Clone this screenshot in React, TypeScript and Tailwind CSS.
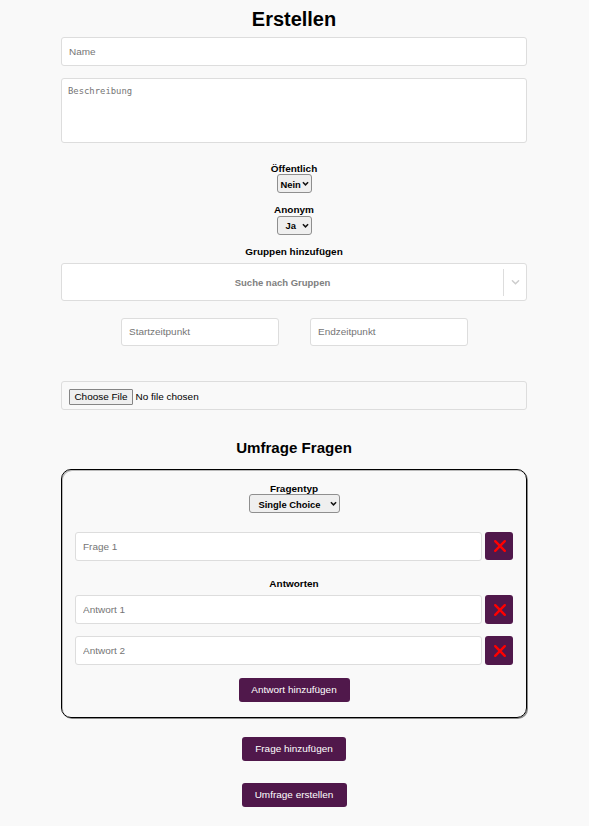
import React from "react";

const field =
  "block rounded-[3px] border border-[#dddddd] bg-white px-[7px] text-[9.98px] text-[#757575] placeholder:text-[#757575] placeholder:opacity-100 outline-none";

function SelectBox({ value, width, pad }: { value: string; width: string; pad: string }) {
  return (
    <div
      className={`flex h-[19px] items-center justify-between rounded-[3px] border border-[#8f8f8f] bg-[#efefef] pr-[2px] text-[9.4px] leading-[11px] font-bold ${width} ${pad}`}
    >
      <span>{value}</span>
      <svg width="7" height="6" viewBox="0 0 7 6" fill="none" stroke="#111" strokeWidth="1.5">
        <path d="M0.9 1.3 L3.5 3.9 L6.1 1.3" />
      </svg>
    </div>
  );
}

function DeleteButton({ height }: { height: string }) {
  return (
    <button className={`flex w-[28px] items-center justify-center rounded-[3px] bg-[#50184b] pl-px ${height}`}>
      <svg width="14" height="14" viewBox="0 0 14 14" stroke="#ff0000" strokeWidth="2.4" strokeLinecap="round">
        <path d="M2.2 2.2 L11.8 11.8 M11.8 2.2 L2.2 11.8" />
      </svg>
    </button>
  );
}

function EntryRow({ label, margin, buttonHeight }: { label: string; margin: string; buttonHeight: string }) {
  return (
    <div className={`flex gap-[3px] ${margin}`}>
      <input className={`${field} h-[29px] w-[407px]`} placeholder={label} />
      <DeleteButton height={buttonHeight} />
    </div>
  );
}

function ActionButton({ label, size }: { label: string; size: string }) {
  return (
    <button className={`h-[24px] rounded-[3px] bg-[#50184b] text-[9.98px] leading-[12px] text-white ${size}`}>
      {label}
    </button>
  );
}

export default function App() {
  return (
    <main className="flex h-[826px] w-[589px] flex-col items-center bg-[#f9f9f9] pr-px font-['Liberation_Sans',Arial,sans-serif] text-[9.98px] leading-[12px] text-black">
      <h1 className="mt-[7px] h-[24px] text-[19.98px] leading-[24px] font-bold">Erstellen</h1>
      <input className={`${field} mt-[6px] h-[29px] w-[466px]`} placeholder="Name" />
      <textarea
        className="mt-[12px] block h-[65px] w-[466px] resize-none rounded-[3px] border border-[#dddddd] bg-white px-[6px] py-[7px] font-['DejaVu_Sans_Mono',monospace] text-[8.89px] leading-[11px] outline-none placeholder:text-[#757575] placeholder:opacity-100"
        placeholder="Beschreibung"
      />
      <label className="mt-[20px] h-[11px] font-bold">Öffentlich</label>
      <SelectBox value="Nein" width="w-[35px]" pad="pl-[3px] pt-px" />
      <label className="mt-[11px] h-[12px] font-bold">Anonym</label>
      <SelectBox value="Ja" width="w-[35px]" pad="pl-[8px]" />
      <label className="mt-[11px] h-[12px] font-bold">Gruppen hinzufügen</label>
      <div className="mt-[5px] flex h-[38px] w-[466px] items-center rounded-[3px] border border-[#dddddd] bg-white">
        <span className="flex-1 pt-[2px] text-center text-[9.5px] font-bold text-[#808080]">Suche nach Gruppen</span>
        <span className="h-[27px] w-px bg-[#dddddd]" />
        <span className="flex w-[22px] justify-center">
          <svg width="9" height="7" viewBox="0 0 9 7" fill="none" stroke="#cccccc" strokeWidth="1.5" strokeLinecap="round">
            <path d="M1.4 1.8 L4.5 4.8 L7.6 1.8" />
          </svg>
        </span>
      </div>
      <div className="mt-[17px] ml-px flex gap-[31px]">
        <input className={`${field} h-[28px] w-[158px] pb-px`} placeholder="Startzeitpunkt" />
        <input className={`${field} h-[28px] w-[158px] pb-px`} placeholder="Endzeitpunkt" />
      </div>
      <div className="mt-[35px] flex h-[29px] w-[466px] items-center rounded-[3px] border border-[#dddddd] pt-[2px] pl-[7px]">
        <button className="h-[16px] w-[64px] rounded-[1px] border border-[#858585] bg-[#efefef] text-[9.98px] leading-[12px]">
          Choose File
        </button>
        <span className="ml-[2.5px]">No file chosen</span>
      </div>
      <h2 className="mt-[29px] h-[18px] text-[15.1px] leading-[18px] font-bold">Umfrage Fragen</h2>
      <section className="mt-[12px] flex h-[249px] w-[466px] flex-col items-center rounded-[10px] border border-black shadow-[inset_1px_1px_0_0_#00000040,1px_1px_0_0_#00000070]">
        <label className="mt-[13px] h-[11px] font-bold">Fragentyp</label>
        <SelectBox value="Single Choice" width="w-[91px]" pad="pl-[9px] pt-px" />
        <EntryRow label="Frage 1" margin="mt-[19px]" buttonHeight="h-[28px]" />
        <label className="mt-[17px] h-[11px] font-bold">Antworten</label>
        <EntryRow label="Antwort 1" margin="mt-[6px]" buttonHeight="h-[29px]" />
        <EntryRow label="Antwort 2" margin="mt-[12px]" buttonHeight="h-[29px]" />
        <div className="mt-[13px] flex">
          <ActionButton label="Antwort hinzufügen" size="w-[111px]" />
        </div>
      </section>
      <div className="mt-[19px] flex">
        <ActionButton label="Frage hinzufügen" size="w-[104px]" />
      </div>
      <div className="mt-[22px] flex">
        <ActionButton label="Umfrage erstellen" size="w-[105px]" />
      </div>
    </main>
  );
}
